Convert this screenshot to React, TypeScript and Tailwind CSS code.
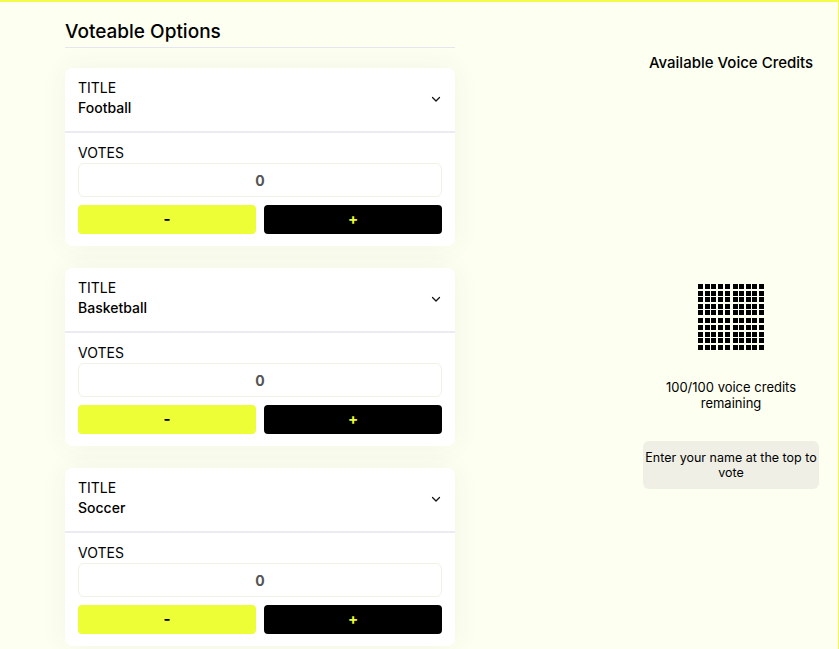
import React, { useState } from 'react';

const options = ['Football', 'Basketball', 'Soccer'];

function Chevron() {
  return (
    <svg width="12" height="12" viewBox="0 0 24 24" fill="none" stroke="#111" strokeWidth="2.5" strokeLinecap="round" strokeLinejoin="round">
      <path d="M5 9l7 7 7-7" />
    </svg>
  );
}

function OptionCard({ title }: { title: string }) {
  const [votes, setVotes] = useState(0);
  return (
    <div className="bg-white rounded-lg shadow-[0_0_28px_rgba(60,60,20,0.06)]">
      <div className="flex items-center justify-between px-[13px] pt-[10px] pb-[13px] border-b-2 border-[#ebebf3]">
        <div className="text-[14px] leading-[20px] text-black">
          <div>TITLE</div>
          <div className="font-medium">{title}</div>
        </div>
        <div className="mt-[2px]">
          <Chevron />
        </div>
      </div>
      <div className="px-[13px] pt-[10px] pb-[12px]">
        <div className="text-[14px] leading-[20px] text-black">VOTES</div>
        <div className="h-[34px] border border-[#f1f1e6] rounded-md flex items-center justify-center text-[14px] font-bold text-[#555]">
          {votes}
        </div>
        <div className="grid grid-cols-2 gap-[8px] mt-[8px]">
          <button
            onClick={() => setVotes(Math.max(0, votes - 1))}
            className="h-[29px] rounded-[4px] bg-[#edfe36] text-black font-bold text-[15px]"
          >
            -
          </button>
          <button
            onClick={() => setVotes(votes + 1)}
            className="h-[29px] rounded-[4px] bg-black text-[#eaff2e] font-bold text-[15px]"
          >
            +
          </button>
        </div>
      </div>
    </div>
  );
}

function CreditGrid() {
  const half = Array.from({ length: 5 });
  const block = (
    <div className="flex flex-col gap-[1.6px]">
      {half.map((_, r) => (
        <div key={r} className="flex gap-[1.6px]">
          {half.map((_, c) => (
            <div key={c} className="w-[5px] h-[5px] bg-black" />
          ))}
        </div>
      ))}
    </div>
  );
  return (
    <div className="flex flex-col gap-[3px]">
      <div className="flex gap-[3px]">{block}{block}</div>
      <div className="flex gap-[3px]">{block}{block}</div>
    </div>
  );
}

export default function App() {
  return (
    <div
      className="w-[839px] h-[649px] overflow-hidden bg-[#fdfff1] border-t-2 border-r border-[#f4fb4a] flex"
      style={{ fontFamily: 'Inter, "Noto Sans", sans-serif' }}
    >
      <div className="w-[390px] ml-[65px] pt-[16px]">
        <h2 className="text-[19px] leading-[28px] font-medium text-black pb-[1px] border-b border-[#e6e6f3]">
          Voteable Options
        </h2>
        <div className="flex flex-col gap-[22px] mt-[20px]">
          {options.map((o) => (
            <OptionCard key={o} title={o} />
          ))}
        </div>
      </div>
      <div className="w-[176px] ml-[188px] flex flex-col items-center">
        <div className="mt-[50px] text-[15px] leading-[22px] font-medium text-black whitespace-nowrap">
          Available Voice Credits
        </div>
        <div className="mt-[210px]">
          <CreditGrid />
        </div>
        <div className="mt-[29px] text-[13px] leading-[16px] text-black text-center">
          100/100 voice credits
          <br />
          remaining
        </div>
        <div className="mt-[30px] w-full bg-[#efefe6] rounded-md px-0 py-[9px] text-[12.5px] leading-[15px] text-black text-center">
          Enter your name at the top to vote
        </div>
      </div>
    </div>
  );
}
